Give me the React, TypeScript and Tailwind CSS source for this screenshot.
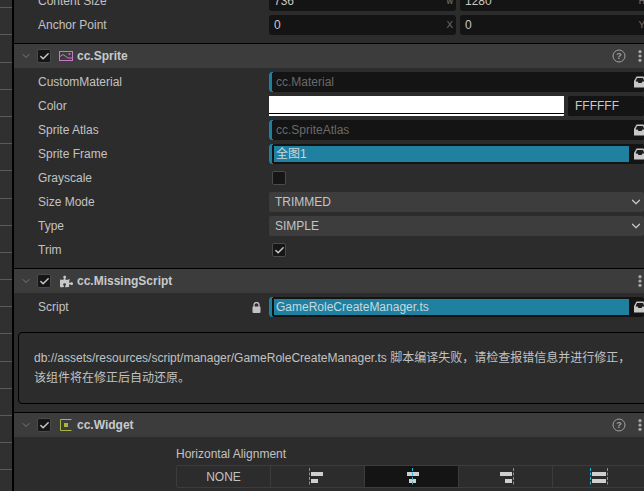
import React from "react";
import { ChevronDown, Check } from "lucide-react";
import { FaPuzzlePiece } from "react-icons/fa";

const FONT = "[font-family:'Liberation_Sans','Noto_Sans_CJK_SC',sans-serif]";

function AssetIcon() {
  return (
    <svg width="12" height="12" viewBox="0 0 12 12" className="shrink-0">
      <path d="M2.5 0.5H9.5L12 5V11.5H0V5Z" fill="#c8c8c8" />
      <path d="M3 2H9L10.5 5.5H8.5L7.5 7H4.5L3.5 5.5H1.5Z" fill="#1c1c1c" />
    </svg>
  );
}

function Bracket() {
  return <div className="w-[4px] h-full shrink-0 rounded-l-[3px] border-l-[3px] border-y border-[#1f7f9e]" />;
}

function AssetField({ text, filled }: { text: string; filled?: boolean }) {
  return (
    <div className="w-[375px] h-5 flex items-center bg-[#141414] rounded-[2px]">
      <Bracket />
      {filled ? (
        <div className="w-[355px] h-4 ml-[1px] bg-[#20809f] text-[#c8d8de] pl-[2px] leading-4 shrink-0">{text}</div>
      ) : (
        <div className="w-[355px] ml-[1px] pl-[2px] text-[#6a6a6a] shrink-0">{text}</div>
      )}
      <div className="ml-[5px]">
        <AssetIcon />
      </div>
    </div>
  );
}

function Row({ label, children, lock }: { label: string; children: React.ReactNode; lock?: boolean }) {
  return (
    <div className="h-6 flex items-center">
      <div className="w-[255px] pl-6 shrink-0 flex items-center justify-between pr-[8px] text-[#c2c2c2]">
        <span>{label}</span>
        {lock && (
          <svg width="9" height="11" viewBox="0 0 9 11">
            <path d="M2 5V3a2.5 2.5 0 0 1 5 0v2" fill="none" stroke="#c2c2c2" strokeWidth="1.3" />
            <rect x="0.5" y="4.5" width="8" height="6.5" rx="1" fill="#c2c2c2" />
          </svg>
        )}
      </div>
      {children}
    </div>
  );
}

function NumberField({ value, unit }: { value: string; unit: string }) {
  return (
    <div className="h-5 flex items-center justify-between bg-[#141414] rounded-[3px] pl-[5px] pr-[3px] text-[#c8c8c8]">
      <span>{value}</span>
      <span className="[font-family:'Liberation_Mono',monospace] text-[#6a6a6a] text-[11px]">{unit}</span>
    </div>
  );
}

function Pair({ a, ua, b, ub }: { a: string; ua: string; b: string; ub: string }) {
  return (
    <div className="w-[379px] grid grid-cols-[187px_188px] gap-1">
      <NumberField value={a} unit={ua} />
      <NumberField value={b} unit={ub} />
    </div>
  );
}

function Select({ text }: { text: string }) {
  return (
    <div className="w-[375px] h-5 flex items-center justify-between bg-[#3d3d3d] rounded-[2px] pl-[6px] pr-[1px] text-[#c4c4c4]">
      <span>{text}</span>
      <ChevronDown size={14} strokeWidth={2.2} color="#c4c4c4" />
    </div>
  );
}

function CheckBox({ on, big }: { on?: boolean; big?: boolean }) {
  return (
    <div className={`w-[14px] h-[14px] flex items-center justify-center bg-[#161616] border border-[#4a4a4a] rounded-[2px] ${big ? "" : "ml-[3px]"}`}>
      {on && <Check size={11} strokeWidth={3.2} color="#c8c8c8" />}
    </div>
  );
}

function Header({ name, icon, help }: { name: string; icon: React.ReactNode; help?: boolean }) {
  return (
    <div className="border-t border-black">
      <div className="h-6 flex items-center bg-[#3c3c3c] text-[#c6cacd] font-bold">
        <div className="w-6 ml-[-1px] flex justify-center shrink-0 pl-[1px]">
          <ChevronDown size={12} strokeWidth={2} color="#7a7a7a" />
        </div>
        <CheckBox on big />
        <div className="w-[14px] ml-[8px] mr-[4px] flex items-center justify-center shrink-0">{icon}</div>
        <span className="flex-1">{name}</span>
        {help && (
          <svg width="14" height="14" viewBox="0 0 14 14" className="mr-[12px]">
            <circle cx="7" cy="7" r="6" fill="none" stroke="#a0a0a0" strokeWidth="1" />
            <text x="7" y="10.2" textAnchor="middle" fontSize="9" fontWeight="700" fill="#a0a0a0">?</text>
          </svg>
        )}
        <svg width="4" height="12" viewBox="0 0 4 12" className="mr-[2px]">
          <circle cx="2" cy="1.7" r="1.6" fill="#a8a8a8" />
          <circle cx="2" cy="6" r="1.6" fill="#a8a8a8" />
          <circle cx="2" cy="10.3" r="1.6" fill="#a8a8a8" />
        </svg>
      </div>
    </div>
  );
}

function SpriteIcon() {
  return (
    <svg width="14" height="10" viewBox="0 0 14 10">
      <rect x="0.5" y="0.5" width="13" height="9" fill="none" stroke="#c878c8" />
      <path d="M1 5.5 L4 3.5 L9 7 L13 7" fill="none" stroke="#c878c8" />
      <circle cx="10.5" cy="3" r="1" fill="#c878c8" />
    </svg>
  );
}

function WidgetIcon() {
  return (
    <svg width="12" height="12" viewBox="0 0 12 12">
      <path d="M11.5 0.5H0.5V11.5H11.5" fill="none" stroke="#a9b545" />
      <rect x="4" y="4" width="4" height="4" fill="#a9b545" />
    </svg>
  );
}

function AlignCell({ active, children }: { active?: boolean; children: React.ReactNode }) {
  return (
    <div className={`flex-1 flex items-center justify-center h-full border-r border-[#3c3c3c] text-[#c2c2c2] ${active ? "bg-[#141414]" : ""}`}>
      {children}
    </div>
  );
}

function AlignIcon({ kind }: { kind: "left" | "center" | "right" | "both" }) {
  const dash = "#27b4d8";
  const bar = "#cfcfcf";
  const line = (x: number) => <line x1={x} y1="0" x2={x} y2="18" stroke={dash} strokeWidth="1" strokeDasharray="3 1.5" />;
  return (
    <svg width="20" height="18" viewBox="0 0 20 18">
      {kind === "left" && (
        <>
          {line(1.5)}
          <rect x="3" y="4" width="12" height="4" fill={bar} />
          <rect x="3" y="11" width="7" height="4" fill={bar} />
        </>
      )}
      {kind === "center" && (
        <>
          <rect x="5" y="4" width="12" height="4" fill={bar} />
          <rect x="7" y="11" width="7" height="4" fill={bar} />
          {line(10.5)}
        </>
      )}
      {kind === "right" && (
        <>
          <rect x="4" y="4" width="12" height="4" fill={bar} />
          <rect x="9" y="11" width="7" height="4" fill={bar} />
          {line(17.5)}
        </>
      )}
      {kind === "both" && (
        <>
          {line(0.5)}
          {line(17.5)}
          <rect x="2" y="4" width="14" height="4" fill={bar} />
          <rect x="2" y="11" width="14" height="4" fill={bar} />
        </>
      )}
    </svg>
  );
}

export default function App() {
  const ticks = Array.from({ length: 20 });
  return (
    <div className={`w-[644px] h-[491px] overflow-hidden flex bg-[#2c2c2c] text-[12px] ${FONT}`}>
      <div className="w-[12px] shrink-0 h-full overflow-hidden bg-[#303030]">
        <div className="mt-[-19px]">
          {ticks.map((_, i) => (
            <div key={i} className="h-[27.2px] border-b border-[#5a5a5a]" />
          ))}
        </div>
      </div>
      <div className="w-[2px] shrink-0 bg-black" />
      <div className="flex-1 min-w-0 overflow-hidden">
        <div className="mt-[-11px] pb-[6px]">
          <Row label="Content Size">
            <Pair a="736" ua="W" b="1280" ub="H" />
          </Row>
          <Row label="Anchor Point">
            <Pair a="0" ua="X" b="0" ub="Y" />
          </Row>
        </div>

        <Header name="cc.Sprite" icon={<SpriteIcon />} help />
        <div className="pt-[2px] pb-[6px]">
          <Row label="CustomMaterial">
            <AssetField text="cc.Material" />
          </Row>
          <Row label="Color">
            <div className="w-[375px] h-5 flex gap-1">
              <div className="w-[295px] shrink-0 flex flex-col rounded-br-[1px] overflow-hidden">
                <div className="h-[17px] bg-white" />
                <div className="h-[1px] bg-black" />
                <div className="h-[1.5px] bg-white" />
              </div>
              <div className="flex-1 h-5 bg-[#141414] rounded-[2px] pl-[7px] flex items-center text-[#c8c8c8]">FFFFFF</div>
            </div>
          </Row>
          <Row label="Sprite Atlas">
            <AssetField text="cc.SpriteAtlas" />
          </Row>
          <Row label="Sprite Frame">
            <AssetField text="全图1" filled />
          </Row>
          <Row label="Grayscale">
            <CheckBox />
          </Row>
          <Row label="Size Mode">
            <Select text="TRIMMED" />
          </Row>
          <Row label="Type">
            <Select text="SIMPLE" />
          </Row>
          <Row label="Trim">
            <CheckBox on />
          </Row>
        </div>

        <Header name="cc.MissingScript" icon={<FaPuzzlePiece size={13} color="#c8c8c8" />} />
        <div className="pt-[2px]">
          <Row label="Script" lock>
            <AssetField text="GameRoleCreateManager.ts" filled />
          </Row>
        </div>
        <div className="mt-[13px] mb-[8px] ml-1 w-[640px] h-[72px] border border-black rounded-[4px] pl-[15px] flex flex-col justify-center text-[#c2c2c2] leading-5">
          <div>db://assets/resources/script/manager/GameRoleCreateManager.ts 脚本编译失败，请检查报错信息并进行修正，</div>
          <div>该组件将在修正后自动还原。</div>
        </div>

        <Header name="cc.Widget" icon={<WidgetIcon />} help />
        <div className="pl-[162px] pt-[10px]">
          <div className="text-[#c2c2c2] leading-[14px] mb-[4px]">Horizontal Alignment</div>
          <div className="w-[472px] h-[23px] flex border border-[#3c3c3c] rounded-[2px]">
            <AlignCell>NONE</AlignCell>
            <AlignCell><AlignIcon kind="left" /></AlignCell>
            <AlignCell active><AlignIcon kind="center" /></AlignCell>
            <AlignCell><AlignIcon kind="right" /></AlignCell>
            <AlignCell><AlignIcon kind="both" /></AlignCell>
          </div>
        </div>
      </div>
    </div>
  );
}
